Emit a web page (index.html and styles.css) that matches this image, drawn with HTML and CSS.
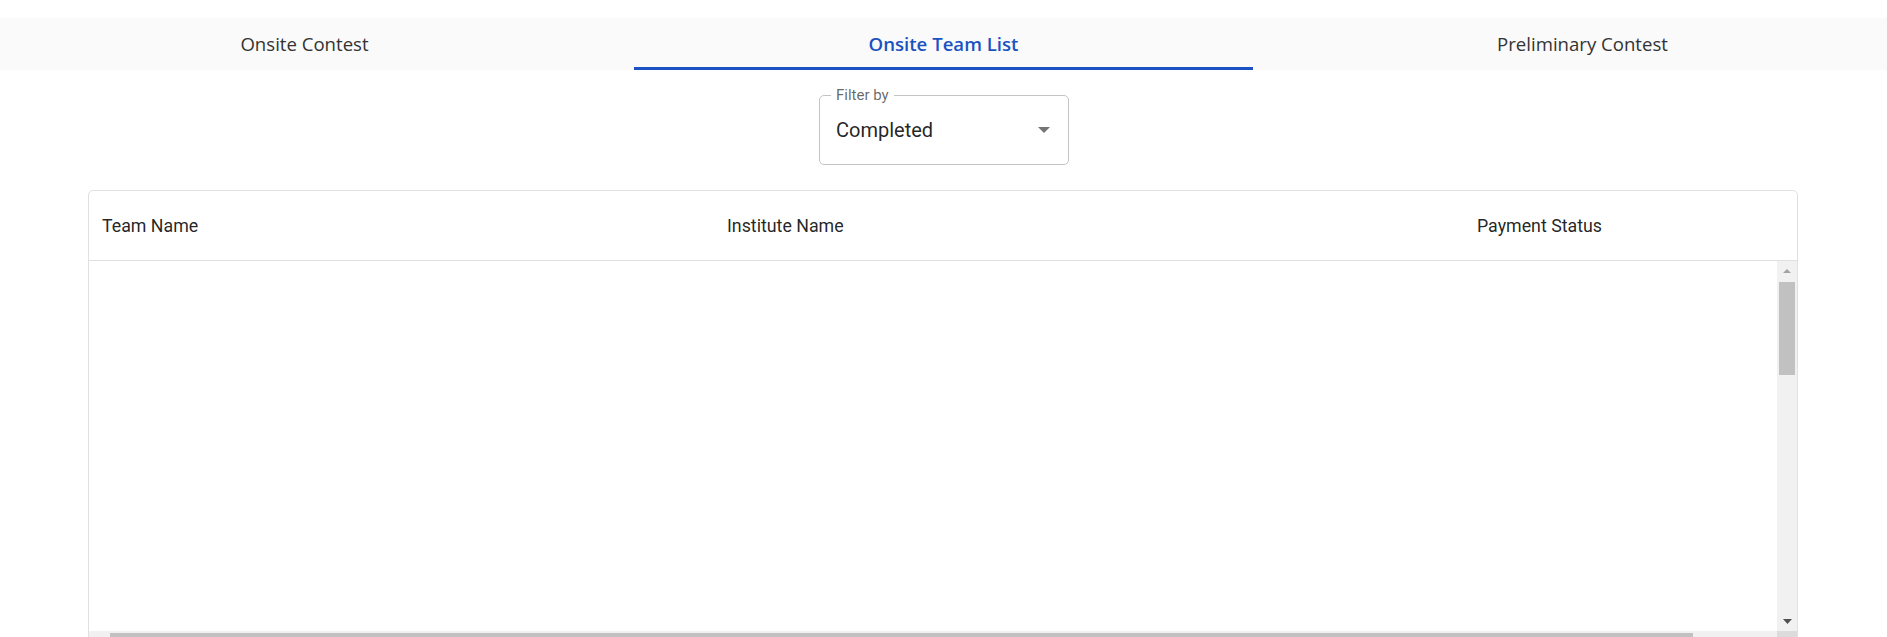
FILE: index.html
```html
<!DOCTYPE html>
<html lang="en">
<head>
<meta charset="utf-8">
<title>Onsite Team List</title>
<link rel="stylesheet" href="styles.css">
</head>
<body>
<div class="page">
  <nav class="tabs">
    <div class="tab">Onsite Contest</div>
    <div class="tab active">Onsite Team List</div>
    <div class="tab">Preliminary Contest</div>
  </nav>

  <div class="filter-row">
    <fieldset class="select">
      <legend>Filter by</legend>
      <div class="select-inner">
        <span class="select-value">Completed</span>
        <svg class="select-arrow" width="12" height="6" viewBox="0 0 12 6"><path d="M0 0 L12 0 L6 6 Z" fill="#757575"/></svg>
      </div>
    </fieldset>
  </div>

  <div class="grid">
    <div class="grid-head">
      <div class="col col-team">Team Name</div>
      <div class="col col-inst">Institute Name</div>
      <div class="col col-pay">Payment Status</div>
    </div>
    <div class="grid-body">
      <div class="body-main">
        <div class="viewport"></div>
        <div class="vscroll">
          <div class="sb-btn">
            <svg width="8" height="4" viewBox="0 0 8 4"><path d="M0 4 L8 4 L4 0 Z" fill="#a3a3a3"/></svg>
          </div>
          <div class="vthumb"></div>
          <div class="sb-fill"></div>
          <div class="sb-btn">
            <svg width="9" height="5" viewBox="0 0 9 5"><path d="M0 0 L9 0 L4.5 5 Z" fill="#505050"/></svg>
          </div>
        </div>
      </div>
      <div class="hscroll">
        <div class="hbtn"></div>
        <div class="hthumb"></div>
        <div class="sb-fill"></div>
        <div class="corner"></div>
      </div>
    </div>
  </div>
</div>
</body>
</html>
```

FILE: styles.css
```css
html, body {
  margin: 0;
  padding: 0;
  overflow: hidden;
  background: #ffffff;
}

.page {
  padding-top: 18px;
  font-family: Roboto, "Liberation Sans", sans-serif;
  color: rgba(0, 0, 0, 0.87);
}

/* Tabs */
.tabs {
  display: flex;
  justify-content: center;
  gap: 20px;
  height: 52px;
  background: #fafafa;
  overflow: hidden;
}

.tab {
  flex: 0 0 619px;
  box-sizing: border-box;
  display: flex;
  align-items: center;
  justify-content: center;
  font-family: "Open Sans", "Noto Sans", sans-serif;
  font-size: 18.6px;
  color: #333333;
  border-bottom: 3px solid transparent;
  padding-top: 1px;
}

.tab.active {
  color: #1a53c1;
  font-weight: 600;
  border-bottom-color: #1a53c1;
}

/* Filter select */
.filter-row {
  display: flex;
  justify-content: center;
  padding-top: 16px;
}

.select {
  box-sizing: border-box;
  width: 250px;
  margin: 0;
  margin-left: 1px;
  border: 1px solid #c4c4c4;
  border-radius: 5px;
  padding: 14px 18px 22px 16px;
}

.select legend {
  font-size: 15px;
  line-height: 18px;
  color: rgba(0, 0, 0, 0.6);
  padding: 0 5px;
  margin-left: -5px;
}

.select-inner {
  display: flex;
  align-items: center;
  justify-content: space-between;
  height: 24px;
}

.select-value {
  font-size: 20px;
  line-height: 24px;
  color: rgba(0, 0, 0, 0.87);
}

.select-arrow {
  display: block;
}

/* Grid */
.grid {
  margin: 25px 89px 0 88px;
  border: 1px solid #e0e0e0;
  border-radius: 5px;
}

.grid-head {
  display: flex;
  height: 69px;
  border-bottom: 1px solid #e0e0e0;
  align-items: center;
  font-size: 17.8px;
  font-weight: 400;
  color: rgba(0, 0, 0, 0.87);
}

.col {
  box-sizing: border-box;
  padding: 0 13px;
}

.col-team { flex: 0 0 625px; }
.col-inst { flex: 0 0 750px; }
.col-pay  { flex: 1 1 auto; }

.grid-body {
  display: flex;
  flex-direction: column;
}

.body-main {
  display: flex;
  height: 370px;
}

.viewport {
  flex: 1 1 auto;
  background: #ffffff;
}

.vscroll {
  flex: 0 0 20px;
  display: flex;
  flex-direction: column;
  background: #f1f1f1;
}

.sb-btn {
  height: 19px;
  display: flex;
  align-items: center;
  justify-content: center;
}

.vthumb {
  height: 93px;
  margin: 2px 2px 0 2px;
  background: #c1c1c1;
}

.sb-fill {
  flex: 1 1 auto;
}

.hscroll {
  display: flex;
  height: 19px;
  background: #f1f1f1;
}

.hbtn {
  flex: 0 0 21px;
}

.hthumb {
  flex: 0 0 1583px;
  height: 15px;
  margin-top: 2px;
  background: #c1c1c1;
}

.corner {
  flex: 0 0 20px;
  background: #dcdcdc;
}
```
